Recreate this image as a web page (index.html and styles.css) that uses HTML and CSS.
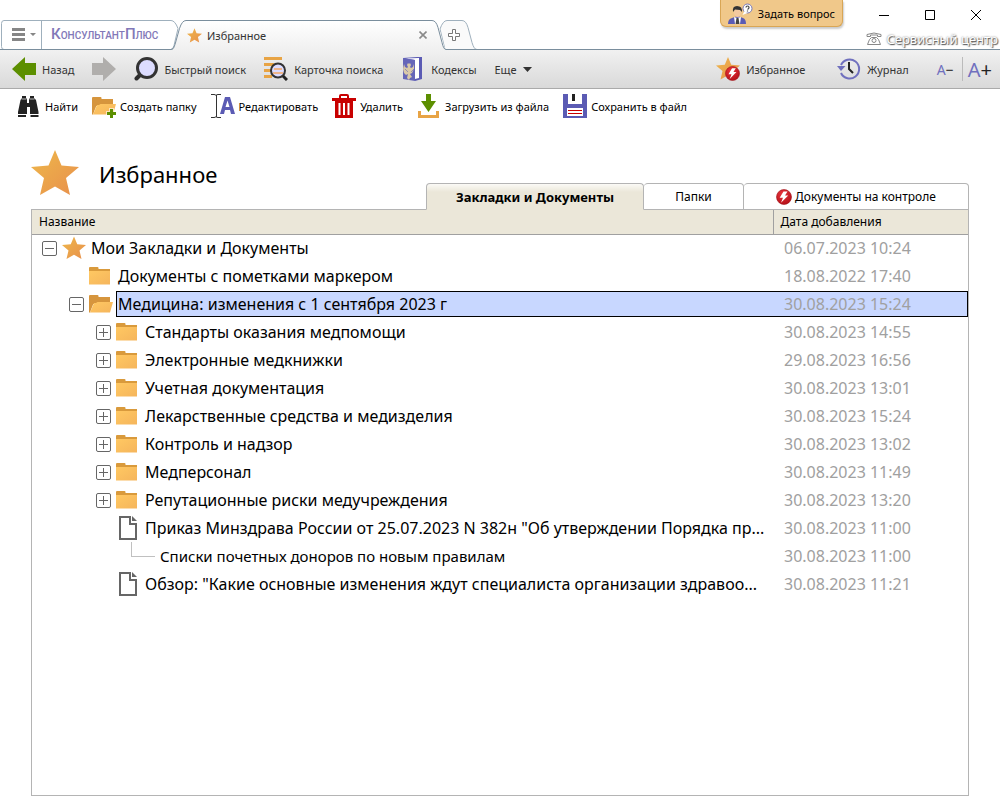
FILE: index.html
```
<!DOCTYPE html>
<html lang="ru">
<head>
  <meta charset="UTF-8" />
  <meta name="viewport" content="width=device-width, initial-scale=1" />
  <title>Избранное</title>
  <link rel="stylesheet" href="styles.css">
</head>
<body>
  <svg class="defs" width="0" height="0" aria-hidden="true">
    <defs>
      <linearGradient id="orange" x1="0" y1="0" x2="1" y2="1">
        <stop offset="0" stop-color="#eeb84a" />
        <stop offset="1" stop-color="#e88f4c" />
      </linearGradient>
      <linearGradient id="folderFill" x1="0" y1="0" x2="1" y2="1">
        <stop offset="0" stop-color="#ffc862" />
        <stop offset="1" stop-color="#f5b55c" />
      </linearGradient>
      <linearGradient id="tabFill" x1="0" y1="0" x2="0" y2="1">
        <stop offset="0" stop-color="#ffffff" />
        <stop offset="1" stop-color="#f0f0f0" />
      </linearGradient>
      <radialGradient id="redFill" cx="0.4" cy="0.3" r="0.8">
        <stop offset="0" stop-color="#e8343c" />
        <stop offset="1" stop-color="#b00c14" />
      </radialGradient>
      <symbol id="star" viewBox="0 0 48 46">
        <path fill="url(#orange)" d="M24 0l6.500 15.500 17.500 1.500-13 11 4 17-15-8.500L9 45l4-17L0 17l17.500-1.500z" />
      </symbol>
      <symbol id="bolt" viewBox="0 0 16 16">
        <circle cx="8" cy="8" r="7.500" fill="url(#redFill)" stroke="#a01018" stroke-width=".6" />
        <path fill="#fff" d="M7.500 2.500h4L9 6.500h3.200L5 13.800l2-5H3.700z" />
      </symbol>
      <symbol id="folder" viewBox="0 0 24 24">
        <path fill="#d99a3c" d="M0 4q0-1 1-1h7.500q1 0 1 1v1H21v4H0z" />
        <path fill="url(#folderFill)" d="M0 7h21v13.500H0z" />
      </symbol>
      <symbol id="folderOpen" viewBox="0 0 24 24">
        <path fill="#d6953d" d="M0 4q0-1 1-1h7.500q1 0 1 1v1H21v7H0z" />
        <path fill="#d6953d" d="M0 10h5L1 20.500H0z" />
        <path fill="url(#folderFill)" d="M5 11h2l1.500-1H24l-3 10.500H1z" />
      </symbol>
      <symbol id="doc" viewBox="0 0 24 24">
        <path fill="#fff" d="M3 0h12l6 6v18H3z" />
        <path fill="none" stroke="#666" stroke-width="2" d="M14 1H4v22h16V8h-6V0" />
        <path fill="#666" d="M16 0l5 5h-5z" />
      </symbol>
    </defs>
  </svg>

  <header class="titlebar">
    <nav class="window-tabs">
      <svg class="tab-shapes" width="480" height="30" aria-hidden="true">
        <path fill="#fff" stroke="#9fb0bd" d="M4 .5h167q4 0 7 8l-4 17q-1 4-3 4H4q-2.500 0-2.500-3V3.500Q1.500.5 4 .5z" />
        <path fill="none" stroke="#9fb0bd" d="M41.500 1v28" />
        <path fill="#fafafa" stroke="#9fb0bd" d="M440 9q3-8.500 7-8.500h15q4 0 6 7l4 15q2 7 5 7h-32z" />
        <path fill="url(#tabFill)" d="M172 30q2-1 3-5l5-16Q182.500.5 187 .5h245q5 0 7 7l4 15q1.500 7 4 7.500z" />
        <path fill="none" stroke="#7a8e9d" d="M0 29.500h171q3 0 4-5l4.500-16Q182 .5 186 .5h246q4 0 6 7l4 15q1.500 7 4 7h34" />
      </svg>
      <button class="menu-btn" aria-label="Меню">
        <svg width="26" height="14" viewBox="0 0 26 14"><path fill="#868686" d="M0 0h13v3H0zM0 5h13v3H0zM0 10h13v3H0zM18 5h6l-3 3z" /></svg>
      </button>
      <a class="brand" href="#"><span class="cap">К</span>ОНСУЛЬТАНТ<span class="cap">П</span>ЛЮС</a>
      <a class="page-tab" href="#">
        <svg width="15" height="15"><use href="#star" /></svg>
        <span>Избранное</span>
      </a>
      <button class="close-tab" aria-label="Закрыть вкладку">
        <svg width="8" height="8" viewBox="0 0 8 8"><path stroke="#8a8a8a" stroke-width="1.600" d="M.5.5l7 7M7.500.5l-7 7" /></svg>
      </button>
      <button class="new-tab" aria-label="Новая вкладка">
        <svg width="13" height="13" viewBox="0 0 13 13"><path fill="#fff" stroke="#777" d="M4.500.5h3v4h4v3h-4v4h-3v-4h-4v-3h4z" /></svg>
      </button>
    </nav>

    <button class="ask-btn">
      <svg width="26" height="22" viewBox="0 0 26 22">
        <path fill="#5b5bb4" d="M0 22q0-5 4-6l4-1.500h3l4 1.500q3 1 3 6z" />
        <path fill="#fff" d="M6 15l3 1 4-1-1 7H7z" />
        <path fill="#444" d="M8.500 16h2l1 6h-4z" />
        <path fill="#f3c9a0" d="M6 7h7v4q-1 4-3.500 4T6 11z" />
        <path fill="#333" d="M5 10q-1-6 4-6 5.500 0 5 6l-2-2-5-.5z" />
        <circle cx="19.500" cy="6.500" r="4.500" fill="#fff" stroke="#7777b8" />
        <path fill="#fff" d="M16.500 9l-2 4 5-2z" />
        <path fill="none" stroke="#444" stroke-width="1.200" d="M18 5.500q0-1.500 1.500-1.500T21 5.500 19.500 7.300M19.500 8.500v1" />
      </svg>
      <span>Задать вопрос</span>
    </button>

    <div class="window-side">
      <div class="window-controls">
        <button aria-label="Свернуть"><svg width="12" height="12"><path stroke="#000" d="M1 6.500h10" /></svg></button>
        <button aria-label="Развернуть"><svg width="12" height="12"><path fill="none" stroke="#000" d="M1.500 1.500h9v9h-9z" /></svg></button>
        <button aria-label="Закрыть"><svg width="12" height="12"><path stroke="#000" d="M1 1l10 10M11 1L1 11" /></svg></button>
      </div>
      <a class="service" href="#">
        <svg width="17" height="14" viewBox="0 0 17 14">
          <path fill="#fff" stroke="#888" d="M1 4.500v-2q7-3 14 0v2h-3.500V3h-7v1.500zM3.500 7.500l2-2h5l2 2 2 5h-13z" />
          <circle cx="8" cy="8.500" r="2" fill="#fff" stroke="#888" />
        </svg>
        <span>Сервисный центр</span>
      </a>
    </div>
  </header>

  <div class="toolbar">
    <button class="tool">
      <svg width="24" height="24" viewBox="0 0 24 24"><path fill="#5c8f00" d="M0 12L13 0v6h11v12H13v6z" /></svg>
      <span>Назад</span>
    </button>
    <button class="tool" aria-label="Вперед">
      <svg width="24" height="24" viewBox="0 0 24 24"><path fill="#b0aeac" d="M24 12L11 0v6H0v12h11v6z" /></svg>
    </button>
    <button class="tool">
      <svg width="24" height="24" viewBox="0 0 24 24">
        <path stroke="#2c2c2c" stroke-width="4" stroke-linecap="round" d="M2.500 21.500l4-4" />
        <circle cx="13" cy="11" r="9.500" fill="#dcdcff" stroke="#333" stroke-width="3" />
      </svg>
      <span>Быстрый поиск</span>
    </button>
    <button class="tool">
      <svg width="24" height="24" viewBox="0 0 24 24">
        <path fill="#e8a445" d="M0 0h18v3H0zM0 6h10v3H0zM0 12h7v3H0zM0 18h8v3H0z" />
        <circle cx="14" cy="13.500" r="7" fill="#dcdcff" stroke="#333" stroke-width="2" />
        <path fill="#efb68b" d="M10 11h8v2h-8zM9 15h10v2H9z" />
        <path stroke="#222" stroke-width="3" d="M19 19l4 4" />
      </svg>
      <span>Карточка поиска</span>
    </button>
    <button class="tool">
      <svg width="24" height="24" viewBox="0 0 24 24">
        <path fill="#5b5bb4" d="M2 1l14-1h5v22l-7 2z" />
        <path fill="#fff" d="M4 1.500L18 1v20l-4 1V3z" />
        <path fill="#6666b8" d="M2 1l12 2v21L2 22z" />
        <path fill="#d9c9a8" d="M3 7l1 3 2 1 1-1-1-2 1-2 1 1 1-1 1 2-1 2 1 1 2-1 1-3v5l-2 4-2 1 2 3-2 1-1 2-2-2 1-4-2 1-2-2-1-4z" />
        <path stroke="#6666b8" stroke-width=".6" d="M4 12l3 3M13 12l-3 3" />
      </svg>
      <span>Кодексы</span>
    </button>
    <button class="tool more">
      <span>Еще</span>
      <svg width="9" height="5" viewBox="0 0 9 5"><path fill="#333" d="M0 0h9L4.500 5z" /></svg>
    </button>

    <div class="toolbar-right">
      <button class="tool">
        <svg width="24" height="24" viewBox="0 0 24 24">
          <use href="#star" width="24" height="23" />
          <use href="#bolt" x="9" y="9" width="15" height="15" />
        </svg>
        <span>Избранное</span>
      </button>
      <button class="tool journal">
        <svg width="24" height="24" viewBox="0 0 24 24">
          <path fill="none" stroke="#7070be" stroke-width="2" d="M4 8a9.500 9.500 0 1 1 0 8" />
          <path fill="#7070be" d="M0 9h8.500L4 14z" />
          <path fill="none" stroke="#222" stroke-width="2" d="M12 5v7l4 4" />
        </svg>
        <span>Журнал</span>
      </button>
      <button class="font-btn small" aria-label="Уменьшить шрифт">A<b>−</b></button>
      <button class="font-btn large" aria-label="Увеличить шрифт">A<b>+</b></button>
    </div>
  </div>

  <div class="actions">
    <button class="action">
      <svg width="24" height="24" viewBox="0 0 24 24">
        <path fill="#222" d="M5 2h4v2l1 1v4h2V5l1-1V2h4v2l2 2 2.500 12v2H13v-7h-3v7H1v-2L3.500 6 5 4zM1 21h8v2H1zM13.500 21h8v2h-8z" />
        <path stroke="#fff" stroke-width=".7" d="M4.500 5h5M12.500 5h5" />
      </svg>
      <span>Найти</span>
    </button>
    <button class="action">
      <svg width="24" height="24" viewBox="0 0 24 24">
        <use href="#folderOpen" width="24" height="24" />
        <path fill="#fff" d="M14 17h3v-3h5v3h2v6h-2v2h-5v-2h-3z" opacity=".6" />
        <path fill="#5c8f00" d="M15 18h3v-3h3v3h3v3h-3v3h-3v-3h-3z" />
      </svg>
      <span>Создать папку</span>
    </button>
    <button class="action">
      <svg width="24" height="24" viewBox="0 0 24 24">
        <path fill="none" stroke="#333" d="M0 .5h3q2 0 2 1 0-1 2-1h3M5.500 1v22M0 23.500h3q2 0 2-1 0 1 2 1h3" />
        <path fill="#5b5bb4" fill-rule="evenodd" d="M9 20l5-17h5l5 17h-4l-1-4h-5l-1 4zM14.500 13h4l-2-6.500z" />
      </svg>
      <span>Редактировать</span>
    </button>
    <button class="action">
      <svg width="24" height="24" viewBox="0 0 24 24">
        <path fill="#c80000" fill-rule="evenodd" d="M0 4h7V2q0-2 2-2h6q2 0 2 2v2h7v3H0zM9 4h6V2H9z" />
        <path fill="#c80000" d="M3 6h18v18H3z" />
        <path stroke="#fff" stroke-width="2" d="M7.500 9v12M12 9v12M16.500 9v12" />
      </svg>
      <span>Удалить</span>
    </button>
    <button class="action">
      <svg width="24" height="24" viewBox="0 0 24 24">
        <path fill="#5c8f00" d="M9 0h5v7h5l-7.500 11L4 7h5z" />
        <path fill="#e8a445" d="M1 17h3v4h15v-4h3v7H1z" />
      </svg>
      <span>Загрузить из файла</span>
    </button>
    <button class="action">
      <svg width="24" height="24" viewBox="0 0 24 24">
        <path fill="#5b5bb4" d="M0 0h24v24H0z" />
        <path fill="#fff" d="M5 0h14v10H5zM4 14h16v8H4z" />
        <path fill="#222" d="M9 0h3v7H9z" />
        <path fill="#c80000" d="M5 16h14v1H5zM5 19h14v1H5z" />
      </svg>
      <span>Сохранить в файл</span>
    </button>
  </div>

  <main>
    <div class="head">
      <div class="title">
        <svg width="48" height="46"><use href="#star" /></svg>
        <h1>Избранное</h1>
      </div>
      <div class="tabs" role="tablist">
        <button class="tab active" role="tab" aria-selected="true">Закладки и Документы</button>
        <button class="tab folders" role="tab">Папки</button>
        <button class="tab control" role="tab"><svg width="16" height="16"><use href="#bolt" /></svg>Документы на контроле</button>
      </div>
    </div>

    <div class="panel">
      <table>
        <thead>
          <tr><th>Название</th><th class="date">Дата добавления</th></tr>
        </thead>
        <tbody>
          <tr>
            <td><div class="node"><button class="toggle open" aria-label="Свернуть"></button><svg class="icon"><use href="#star" /></svg><span class="label">Мои Закладки и Документы</span></div></td>
            <td class="date"><span class="label">06.07.2023 10:24</span></td>
          </tr>
          <tr>
            <td><div class="node level-1 leaf"><svg class="icon"><use href="#folder" /></svg><span class="label">Документы с пометками маркером</span></div></td>
            <td class="date"><span class="label">18.08.2022 17:40</span></td>
          </tr>
          <tr class="selected">
            <td><div class="node level-1"><button class="toggle open" aria-label="Свернуть"></button><svg class="icon"><use href="#folderOpen" /></svg><span class="label">Медицина: изменения с 1 сентября 2023 г</span></div></td>
            <td class="date"><span class="label">30.08.2023 15:24</span></td>
          </tr>
          <tr>
            <td><div class="node level-2"><button class="toggle" aria-label="Развернуть"></button><svg class="icon"><use href="#folder" /></svg><span class="label">Стандарты оказания медпомощи</span></div></td>
            <td class="date"><span class="label">30.08.2023 14:55</span></td>
          </tr>
          <tr>
            <td><div class="node level-2"><button class="toggle" aria-label="Развернуть"></button><svg class="icon"><use href="#folder" /></svg><span class="label">Электронные медкнижки</span></div></td>
            <td class="date"><span class="label">29.08.2023 16:56</span></td>
          </tr>
          <tr>
            <td><div class="node level-2"><button class="toggle" aria-label="Развернуть"></button><svg class="icon"><use href="#folder" /></svg><span class="label">Учетная документация</span></div></td>
            <td class="date"><span class="label">30.08.2023 13:01</span></td>
          </tr>
          <tr>
            <td><div class="node level-2"><button class="toggle" aria-label="Развернуть"></button><svg class="icon"><use href="#folder" /></svg><span class="label">Лекарственные средства и медизделия</span></div></td>
            <td class="date"><span class="label">30.08.2023 15:24</span></td>
          </tr>
          <tr>
            <td><div class="node level-2"><button class="toggle" aria-label="Развернуть"></button><svg class="icon"><use href="#folder" /></svg><span class="label">Контроль и надзор</span></div></td>
            <td class="date"><span class="label">30.08.2023 13:02</span></td>
          </tr>
          <tr>
            <td><div class="node level-2"><button class="toggle" aria-label="Развернуть"></button><svg class="icon"><use href="#folder" /></svg><span class="label">Медперсонал</span></div></td>
            <td class="date"><span class="label">30.08.2023 11:49</span></td>
          </tr>
          <tr>
            <td><div class="node level-2"><button class="toggle" aria-label="Развернуть"></button><svg class="icon"><use href="#folder" /></svg><span class="label">Репутационные риски медучреждения</span></div></td>
            <td class="date"><span class="label">30.08.2023 13:20</span></td>
          </tr>
          <tr>
            <td><div class="node level-2 leaf"><svg class="icon"><use href="#doc" /></svg><span class="label">Приказ Минздрава России от 25.07.2023 N 382н "Об утверждении Порядка пр...</span></div></td>
            <td class="date"><span class="label">30.08.2023 11:00</span></td>
          </tr>
          <tr>
            <td><div class="node bookmark"><span class="branch"></span><span class="label">Списки почетных доноров по новым правилам</span></div></td>
            <td class="date"><span class="label">30.08.2023 11:00</span></td>
          </tr>
          <tr>
            <td><div class="node level-2 leaf"><svg class="icon"><use href="#doc" /></svg><span class="label">Обзор: "Какие основные изменения ждут специалиста организации здравоо...</span></div></td>
            <td class="date"><span class="label">30.08.2023 11:21</span></td>
          </tr>
        </tbody>
      </table>
    </div>
  </main>
</body>
</html>
```
FILE: styles.css
```
* {
  box-sizing: border-box;
}

body {
  margin: 0;
  min-height: 100vh;
  display: flex;
  flex-direction: column;
  font-family: "Noto Sans", "DejaVu Sans", sans-serif;
  font-size: 11px;
  color: #000;
  background: #fff;
}

button {
  padding: 0;
  border: none;
  background: none;
  font: inherit;
  color: inherit;
  cursor: pointer;
}

a {
  color: inherit;
  text-decoration: none;
}

svg {
  flex: none;
  display: block;
}

.defs {
  position: absolute;
}

/* window title */
.titlebar {
  display: flex;
  align-items: flex-start;
  height: 50px;
  border-bottom: 1px solid #7a8e9d;
}

.window-tabs {
  position: relative;
  display: flex;
  align-items: center;
  width: 480px;
  height: 30px;
  margin-top: 20px;
}

.window-tabs > * {
  position: relative;
}

.window-tabs .tab-shapes {
  position: absolute;
  top: 0;
  left: 0;
}

.menu-btn {
  width: 41px;
  padding-left: 12px;
}

.brand {
  width: 136px;
  padding-left: 10px;
  font-family: Roboto, "Liberation Sans", sans-serif;
  font-size: 10px;
  font-weight: 500;
  line-height: 20px;
  white-space: nowrap;
  color: #8278b8;
}

.brand .cap {
  font-size: 15px;
}

.page-tab {
  display: flex;
  align-items: center;
  gap: 5px;
  width: 242px;
  padding-left: 10px;
  color: #333;
}

.close-tab {
  width: 8px;
}

.new-tab {
  margin-left: 21px;
}

.ask-btn {
  display: flex;
  align-items: center;
  gap: 4px;
  height: 27px;
  margin-left: auto;
  padding: 0 7px;
  border: 1px solid #d9a655;
  border-top: none;
  border-radius: 0 0 6px 6px;
  background: #f0c88a;
  box-shadow: 1px 2px 2px #ccc;
  white-space: nowrap;
}

.window-side {
  width: 157px;
  padding-right: 2px;
}

.window-controls {
  display: flex;
  justify-content: flex-end;
  gap: 34px;
  padding: 9px 16px 8px 0;
}

.service {
  display: flex;
  align-items: center;
  justify-content: flex-end;
  gap: 3px;
  height: 20px;
  font-size: 13px;
  white-space: nowrap;
  color: #fff;
  text-shadow: 1px 1px 1px #555, 0 0 2px #666;
}

/* main toolbar */
.toolbar {
  display: flex;
  align-items: center;
  gap: 18px;
  height: 39px;
  padding: 0 8px 0 12px;
  border-bottom: 1px solid #aaa;
  background: linear-gradient(#f1f1f1, #d9d9d9);
  color: #333;
}

.tool {
  display: flex;
  align-items: center;
  gap: 6px;
  white-space: nowrap;
}

.toolbar-right {
  display: flex;
  align-items: center;
  margin-left: auto;
}

.journal {
  margin: 0 28px 0 32px;
}

.font-btn {
  display: flex;
  align-items: center;
  height: 24px;
  color: #7070be;
}

.font-btn b {
  font-weight: normal;
  color: #222;
}

.font-btn.small {
  padding-right: 8px;
  border-right: 1px solid #bbb;
  font-size: 14px;
}

.font-btn.large {
  padding-left: 5px;
  font-size: 20px;
}

/* actions on the list */
.actions {
  display: flex;
  align-items: center;
  gap: 14px;
  height: 34px;
  padding-left: 17px;
}

.action {
  display: flex;
  align-items: center;
  gap: 4px;
  white-space: nowrap;
}

main {
  flex: 1;
  display: flex;
  flex-direction: column;
  margin: 27px 31px 4px;
}

.head {
  display: flex;
  align-items: flex-end;
  justify-content: space-between;
  height: 59px;
}

.title {
  display: flex;
  align-items: center;
  gap: 20px;
  align-self: flex-start;
}

h1 {
  margin: 2px 0 0;
  font-size: 22px;
  font-weight: normal;
}

.tabs {
  display: flex;
  position: relative;
  margin-bottom: -1px;
}

.tab {
  display: flex;
  align-items: center;
  justify-content: center;
  gap: 3px;
  height: 27px;
  border: 1px solid #b4b4b4;
  border-left: none;
  border-radius: 4px 4px 0 0;
  background: #fff;
  font-size: 12px;
}

.tab.active {
  width: 218px;
  border-left: 1px solid #b4b4b4;
  border-bottom-color: #ebe7d9;
  background: linear-gradient(#fbfaf6, #ebe7d9 8px);
  font-size: 13px;
  font-weight: bold;
}

.tab.folders {
  width: 100px;
}

.tab.control {
  width: 225px;
}

.panel {
  flex: 1;
  border: 1px solid #b4b4b4;
}

table {
  width: 100%;
  table-layout: fixed;
  border-collapse: collapse;
}

th {
  height: 24px;
  padding: 0 7px;
  border-bottom: 1px solid #a0a0a0;
  background: #ebe7d9;
  font-size: 12px;
  font-weight: normal;
  text-align: left;
}

th.date {
  width: 195px;
  border-left: 1px solid #a0a0a0;
}

td {
  height: 28px;
  padding: 0;
  font-size: 16px;
  line-height: 24px;
}

.node {
  display: flex;
  align-items: center;
  padding-left: 10px;
}

.level-1 {
  padding-left: 37px;
}

.level-2 {
  padding-left: 64px;
}

.leaf.level-1 {
  padding-left: 57px;
}

.leaf.level-2 {
  padding-left: 84px;
}

.bookmark {
  padding-left: 99px;
  font-size: 15px;
}

.toggle {
  width: 15px;
  height: 15px;
  margin-right: 5px;
  border: 1px solid #666;
  border-radius: 2px;
  background: linear-gradient(#666, #666) center / 9px 1px no-repeat;
}

.toggle:not(.open) {
  background: linear-gradient(#666, #666) center / 9px 1px no-repeat, linear-gradient(#666, #666) center / 1px 9px no-repeat;
}

.icon {
  width: 24px;
  height: 24px;
}

.branch {
  width: 24px;
  height: 15px;
  margin-bottom: 13px;
  border-left: 1px solid #c0c0c0;
  border-bottom: 1px solid #c0c0c0;
}

.label {
  flex: 1;
  display: block;
  margin-left: 3px;
  padding-left: 2px;
  border: 1px solid transparent;
  border-width: 1px 0;
  white-space: nowrap;
}

td.date .label {
  margin-left: 0;
  padding-left: 11px;
  color: #a0a0a0;
}

.selected .label {
  border: 1px solid #000;
  border-right: none;
  padding-left: 1px;
  background: #c8d7ff;
}

.selected td.date .label {
  padding-left: 11px;
  border-left: none;
  border-right: 1px solid #000;
}
```
